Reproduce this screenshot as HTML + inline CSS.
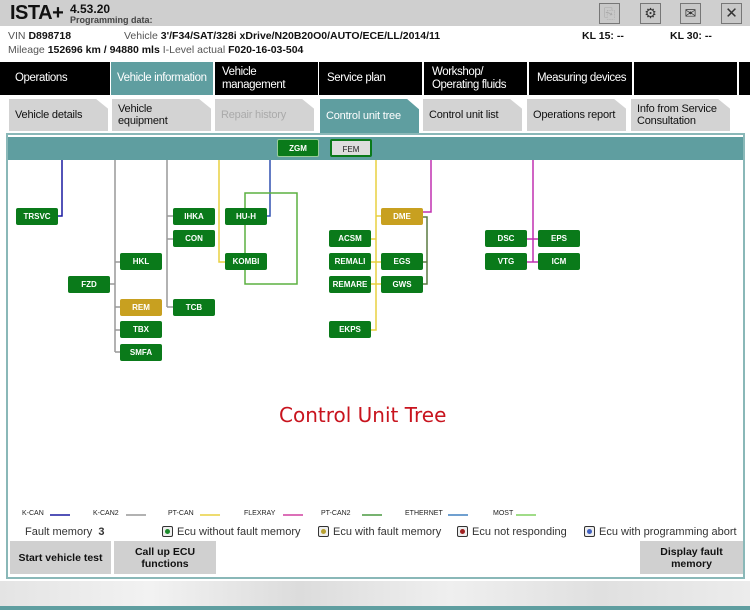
<!DOCTYPE html>
<html><head><meta charset="utf-8"><style>
*{margin:0;padding:0;box-sizing:border-box}
body{width:750px;height:610px;overflow:hidden;background:#fff;font-family:"Liberation Sans",Arial,sans-serif;position:relative;font-size:11px;color:#111}
.a{position:absolute}
.hdr{left:0;top:0;width:750px;height:26px;background:#cfcfcf}
.ib{width:21px;height:21px;border:1px solid #777;background:#c8c8c8;top:3px;font-size:14px;text-align:center;line-height:19px;color:#333}
.nav{top:62px;height:33px;background:#000;color:#fff;font-size:11.5px;letter-spacing:-0.4px;white-space:nowrap;display:flex;align-items:center;padding-left:6px;line-height:13px}
.tab{top:99px;height:32px;background:#d3d3d3;color:#111;font-size:11px;letter-spacing:-0.2px;display:flex;align-items:center;padding-left:6px;line-height:12px;clip-path:polygon(0 0,88% 0,100% 30%,100% 100%,0 100%)}
.b{width:42px;height:17px;background:#0a7a1a;color:#fff;font-size:8px;text-align:center;line-height:17px;border-radius:2px;font-weight:bold}
.g{background:#c8a020}
.btn{top:541px;height:33px;background:#d0d0d0;font-size:10.5px;font-weight:bold;text-align:center;display:flex;align-items:center;justify-content:center;line-height:12px}
.lg{top:510px;font-size:7px;color:#222}
.dot{display:inline-block;width:11px;height:11px;border:1px solid #333;border-radius:2px;vertical-align:-2px;margin-right:4px;position:relative;background:#eee}
.dot i{position:absolute;left:2px;top:2px;width:5px;height:5px;border-radius:50%}
</style></head><body>
<div class="a hdr"></div>
<div class="a" style="left:10px;top:2px;font-size:20px;font-weight:bold;letter-spacing:-0.5px">ISTA+</div>
<div class="a" style="left:70px;top:2px;font-size:12px;font-weight:bold">4.53.20</div>
<div class="a" style="left:70px;top:15px;font-size:9px;font-weight:bold;color:#444">Programming data:</div>
<div class="a ib" style="left:599px;color:#aaa">⎘</div>
<div class="a ib" style="left:640px">⚙</div>
<div class="a ib" style="left:680px">✉</div>
<div class="a ib" style="left:721px;font-size:15px">✕</div>
<div class="a" style="left:8px;top:30px;font-size:10.5px"><span style="color:#555">VIN</span> <b>D898718</b></div>
<div class="a" style="left:124px;top:30px;font-size:10.5px"><span style="color:#555">Vehicle</span> <b>3'/F34/SAT/328i xDrive/N20B20O0/AUTO/ECE/LL/2014/11</b></div>
<div class="a" style="left:582px;top:30px;font-size:10.5px"><b>KL 15:  --</b></div>
<div class="a" style="left:670px;top:30px;font-size:10.5px"><b>KL 30:  --</b></div>
<div class="a" style="left:8px;top:44px;font-size:10.5px"><span style="color:#555">Mileage</span> <b>152696 km / 94880 mls</b> <span style="color:#555">I-Level actual</span> <b>F020-16-03-504</b></div>
<div class="a" style="left:0;top:62px;width:750px;height:33px;background:#fff"></div>
<div class="a nav" style="left:0;width:110px;padding-left:15px">Operations</div>
<div class="a nav" style="left:111px;width:102px;background:#5f9ea0">Vehicle information</div>
<div class="a nav" style="left:215px;width:103px;padding-left:7px">Vehicle<br>management</div>
<div class="a nav" style="left:319px;width:103px;padding-left:8px">Service plan</div>
<div class="a nav" style="left:424px;width:103px;padding-left:8px">Workshop/<br>Operating fluids</div>
<div class="a nav" style="left:529px;width:103px;padding-left:8px">Measuring devices</div>
<div class="a nav" style="left:634px;width:103px"></div>
<div class="a nav" style="left:739px;width:11px"></div>
<div class="a tab" style="left:9px;width:99px">Vehicle details</div>
<div class="a tab" style="left:112px;width:99px">Vehicle<br>equipment</div>
<div class="a tab" style="left:215px;width:99px;color:#aaa">Repair history</div>
<div class="a tab" style="left:320px;width:99px;background:#5f9ea0;color:#fff;height:34px">Control unit tree</div>
<div class="a tab" style="left:423px;width:99px">Control unit list</div>
<div class="a tab" style="left:527px;width:99px">Operations report</div>
<div class="a tab" style="left:631px;width:99px">Info from Service<br>Consultation</div>
<div class="a" style="left:6px;top:133px;width:739px;height:446px;border:2px solid #8ab8b8"></div>
<div class="a" style="left:8px;top:137px;width:735px;height:23px;background:#5f9ea0"></div>
<div class="a b" style="left:277px;top:139px;border:1px solid #9c9;height:18px">ZGM</div>
<div class="a b" style="left:330px;top:139px;background:#ddd;color:#222;border:2px solid #0a7a1a;height:18px;font-weight:normal">FEM</div>
<svg class="a" style="left:0;top:0" width="750" height="610" fill="none" stroke-width="1.5">
<path d="M62 160V216H57" stroke="#1a1aa0"/>
<path d="M115 160V352M110 284H115M115 262H120M115 307H120M115 330H120M115 352H120" stroke="#999"/>
<path d="M167 160V307M167 216H173M167 239H173M167 307H173" stroke="#999"/>
<path d="M219 160V262H225" stroke="#e8d040"/>
<path d="M270 160V216H266" stroke="#3050b0"/>
<path d="M245 193H297V284H245Z" stroke="#5cb040"/>
<path d="M376 160V330H370M370 239H376M370 262H381M370 284H381M376 216H381" stroke="#e8d040"/>
<path d="M431 160V212H422" stroke="#c030b0"/>
<path d="M422 217H427V284H422M422 262H427" stroke="#5a7a40"/>
<path d="M533 160V262H527M527 239H538M533 262H538" stroke="#c030b0"/>
<path d="M50 515H70" stroke="#1a1aa0"/><path d="M126 515H146" stroke="#999"/><path d="M200 515H220" stroke="#e8d040"/>
<path d="M283 515H303" stroke="#d040a0"/><path d="M362 515H382" stroke="#4a9a40"/><path d="M448 515H468" stroke="#4080c0"/><path d="M516 515H536" stroke="#80d060"/>
</svg>
<div class="a b" style="left:16px;top:208px">TRSVC</div>
<div class="a b" style="left:173px;top:208px">IHKA</div>
<div class="a b" style="left:173px;top:230px">CON</div>
<div class="a b" style="left:225px;top:208px">HU-H</div>
<div class="a b" style="left:225px;top:253px">KOMBI</div>
<div class="a b" style="left:120px;top:253px">HKL</div>
<div class="a b" style="left:68px;top:276px">FZD</div>
<div class="a b g" style="left:120px;top:299px">REM</div>
<div class="a b" style="left:173px;top:299px">TCB</div>
<div class="a b" style="left:120px;top:321px">TBX</div>
<div class="a b" style="left:120px;top:344px">SMFA</div>
<div class="a b" style="left:329px;top:230px">ACSM</div>
<div class="a b g" style="left:381px;top:208px">DME</div>
<div class="a b" style="left:329px;top:253px">REMALI</div>
<div class="a b" style="left:381px;top:253px">EGS</div>
<div class="a b" style="left:329px;top:276px">REMARE</div>
<div class="a b" style="left:381px;top:276px">GWS</div>
<div class="a b" style="left:329px;top:321px">EKPS</div>
<div class="a b" style="left:485px;top:230px">DSC</div>
<div class="a b" style="left:538px;top:230px">EPS</div>
<div class="a b" style="left:485px;top:253px">VTG</div>
<div class="a b" style="left:538px;top:253px">ICM</div>
<div class="a" style="left:279px;top:403px;font-size:20px;color:#c8141e;font-family:'DejaVu Sans',sans-serif">Control Unit Tree</div>
<div class="a lg" style="left:22px">K-CAN</div><div class="a lg" style="left:93px">K-CAN2</div><div class="a lg" style="left:168px">PT-CAN</div>
<div class="a lg" style="left:244px">FLEXRAY</div><div class="a lg" style="left:321px">PT-CAN2</div><div class="a lg" style="left:405px">ETHERNET</div><div class="a lg" style="left:493px">MOST</div>
<div class="a" style="left:25px;top:526px;font-size:11px;color:#333">Fault memory &nbsp;<b>3</b></div>
<div class="a" style="left:162px;top:526px;font-size:11px;color:#333"><span class="dot"><i style="background:#1a8a2a"></i></span>Ecu without fault memory</div>
<div class="a" style="left:318px;top:526px;font-size:11px;color:#333"><span class="dot"><i style="background:#b8a030"></i></span>Ecu with fault memory</div>
<div class="a" style="left:457px;top:526px;font-size:11px;color:#333"><span class="dot"><i style="background:#a02020"></i></span>Ecu not responding</div>
<div class="a" style="left:584px;top:526px;font-size:11px;color:#333"><span class="dot"><i style="background:#4060c0"></i></span>Ecu with programming abort</div>
<div class="a btn" style="left:10px;width:101px">Start vehicle test</div>
<div class="a btn" style="left:114px;width:102px">Call up ECU<br>functions</div>
<div class="a btn" style="left:640px;width:103px">Display fault<br>memory</div>
<div class="a" style="left:0;top:581px;width:750px;height:25px;background:linear-gradient(90deg,#e4e4e4,#f2f2f2 20%,#dcdcdc 40%,#efefef 60%,#e0e0e0 80%,#ececec)"></div>
<div class="a" style="left:0;top:606px;width:750px;height:4px;background:#5f9ea0"></div>
</body></html>
